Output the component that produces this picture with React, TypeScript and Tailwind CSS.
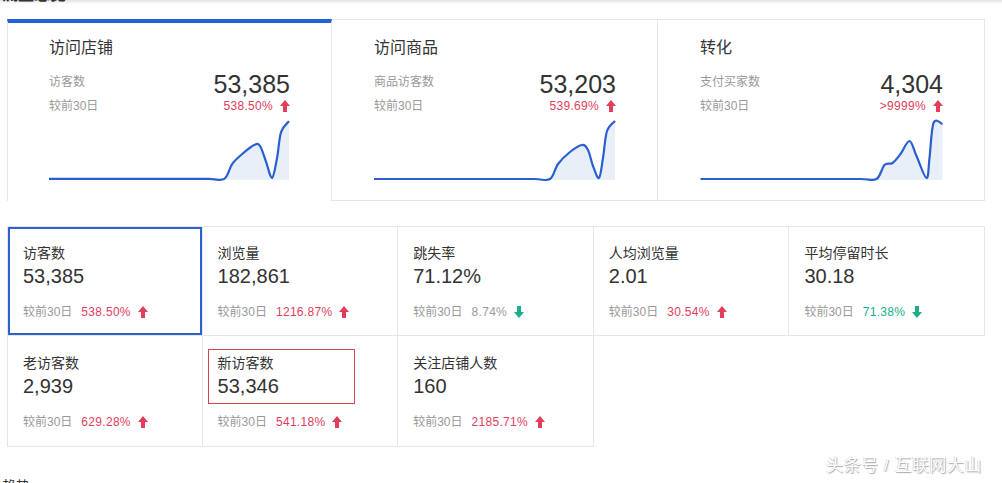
import React from 'react';

type Pt = [number, number];

const FONT = { fontFamily: '"Liberation Sans", "Noto Sans CJK SC", sans-serif' };

// catmull-rom -> cubic bezier, for the small trend charts
function smooth(pts: Pt[]) {
  let d = `M${pts[0][0]} ${pts[0][1]}`;
  for (let i = 0; i < pts.length - 1; i++) {
    const p0 = pts[i - 1] ?? pts[i];
    const p1 = pts[i];
    const p2 = pts[i + 1];
    const p3 = pts[i + 2] ?? p2;
    const c1: Pt = [p1[0] + (p2[0] - p0[0]) / 6, p1[1] + (p2[1] - p0[1]) / 6];
    const c2: Pt = [p2[0] - (p3[0] - p1[0]) / 6, p2[1] - (p3[1] - p1[1]) / 6];
    d += ` C${c1[0]} ${c1[1]} ${c2[0]} ${c2[1]} ${p2[0]} ${p2[1]}`;
  }
  return d;
}

function Arrow({ up, className }: { up: boolean; className: string }) {
  return (
    <svg viewBox="0 0 10 12" className={className} style={{ transform: up ? undefined : 'rotate(180deg)' }}>
      <path d="M5 0 L10 6 H7 V12 H3 V6 H0 Z" fill="currentColor" />
    </svg>
  );
}

function Spark({ pts }: { pts: Pt[] }) {
  const line = smooth(pts);
  const area = `${line} L${pts[pts.length - 1][0]} 62 L0 62 Z`;
  return (
    <svg viewBox="0 0 242 62" className="w-full h-[62px] block overflow-visible">
      <path d={area} fill="#e8eff9" />
      <path d={line} fill="none" stroke="#2a5fcf" strokeWidth={2.2} strokeLinejoin="round" />
    </svg>
  );
}

const flat: Pt[] = [[0, 61], [40, 61], [80, 61], [120, 61], [160, 61], [176, 61]];

const cards = [
  {
    title: '访问店铺', label: '访客数', value: '53,385', pct: '538.50%',
    pts: [...flat, [184, 46], [194, 36], [206, 27], [212, 28], [218, 44], [224, 60], [229, 40], [233, 14], [241, 3]] as Pt[],
  },
  {
    title: '访问商品', label: '商品访客数', value: '53,203', pct: '539.69%',
    pts: [...flat, [184, 46], [196, 34], [208, 27], [214, 32], [219, 48], [225, 60], [229, 40], [233, 13], [241, 3]] as Pt[],
  },
  {
    title: '转化', label: '支付买家数', value: '4,304', pct: '>9999%',
    pts: [...flat, [184, 47], [192, 45], [200, 36], [209, 23], [216, 38], [226, 60], [229, 40], [233, 5], [242, 6]] as Pt[],
  },
];

const metrics = [
  { label: '访客数', value: '53,385', pct: '538.50%', up: true, active: true },
  { label: '浏览量', value: '182,861', pct: '1216.87%', up: true },
  { label: '跳失率', value: '71.12%', pct: '8.74%', up: false, grayPct: true },
  { label: '人均浏览量', value: '2.01', pct: '30.54%', up: true },
  { label: '平均停留时长', value: '30.18', pct: '71.38%', up: false },
  { label: '老访客数', value: '2,939', pct: '629.28%', up: true },
  { label: '新访客数', value: '53,346', pct: '541.18%', up: true, boxed: true },
  { label: '关注店铺人数', value: '160', pct: '2185.71%', up: true },
];

export default function App() {
  return (
    <div className="relative w-[1002px] h-[483px] bg-white overflow-hidden text-[#333]" style={FONT}>
      {/* cut-off section header */}
      <div className="h-[4px] overflow-hidden bg-gradient-to-b from-[#e2e2e2] to-white">
        <div className="-mt-[14px] pl-[2px] text-[16px] font-bold leading-[18px] text-[#333]">流量总览</div>
      </div>

      {/* channel cards */}
      <div className="ml-[7px] mt-[15px] w-[978px] grid grid-cols-[325px_326px_327px]">
        {cards.map((c, i) => (
          <div
            key={c.title}
            className={
              i === 0
                ? 'border-l border-r border-[#e6e6e6] border-t-4 border-t-[#2062d8] h-[182px]'
                : 'border-t border-r border-b border-[#e6e6e6] h-[182px] pt-[3px]'
            }
          >
            <div className={i === 0 ? 'pl-[41px] pr-[41px] pt-[13px]' : 'pl-[42px] pr-[41px] pt-[13px]'}>
              <div className="text-[16px] leading-[24px] text-[#333]">{c.title}</div>
              <div className="mt-[10px] flex items-center justify-between h-[28px]">
                <span className="text-[12px] text-[#999] -mt-[4px]">{c.label}</span>
                <span className="text-[25px] leading-[28px] text-[#333]">{c.value}</span>
              </div>
              <div className="flex items-center justify-between h-[16px] text-[12px]">
                <span className="text-[#999]">较前30日</span>
                <span className="flex items-center gap-[7px] text-[#e23d5b] tracking-[0.3px]">
                  {c.pct}
                  <Arrow up className="w-[10px] h-[12px]" />
                </span>
              </div>
              <div className="mt-[4px]">
                <Spark pts={c.pts} />
              </div>
            </div>
          </div>
        ))}
      </div>

      {/* metric grid */}
      <div className="ml-[7px] mt-[25px] w-[978px] grid grid-cols-5">
        {metrics.map((m, i) => (
          <div
            key={m.label}
            className={
              'relative border-r border-b border-[#e6e6e6] pl-[15px] pt-[16px] ' +
              (i < 5 ? 'border-t h-[110px] ' : 'h-[111px] pt-[17px] ') +
              (i % 5 === 0 ? 'border-l ' : '') +
              (m.active ? 'ring-2 ring-inset ring-[#2a62d3]' : '')
            }
          >
            <div className="text-[14px] leading-[20px] text-[#333]">{m.label}</div>
            <div className="text-[20px] leading-[26px] text-[#333]">{m.value}</div>
            <div className="mt-[14px] flex items-center text-[12px] leading-[18px]">
              <span className="text-[#999]">较前30日</span>
              <span
                className={
                  'ml-[9px] tracking-[0.3px] ' +
                  (m.up ? 'text-[#e23d5b]' : m.grayPct ? 'text-[#999]' : 'text-[#1aae8c]')
                }
              >
                {m.pct}
              </span>
              <Arrow
                up={m.up}
                className={'ml-[7px] w-[10px] h-[12px] ' + (m.up ? 'text-[#e23d5b]' : 'text-[#1aae8c]')}
              />
            </div>
            {m.boxed && (
              <div className="absolute left-[5px] top-[13px] w-[147px] h-[55px] border border-[#d0474d]" />
            )}
          </div>
        ))}
      </div>

      {/* cut-off next section */}
      <div className="mt-[30px] h-[6px] overflow-hidden">
        <div className="pl-[2px] text-[14px] leading-[18px] text-[#333]">趋势</div>
      </div>

      {/* watermark */}
      <div
        className="absolute left-[826px] top-[455px] text-[17px] leading-[22px] text-white tracking-[0.5px]"
        style={{ textShadow: '1px 1px 1px #a8a8a8, -0.5px 0 0.5px #c4c4c4' }}
      >
        头条号 / 互联网大山
      </div>
    </div>
  );
}
